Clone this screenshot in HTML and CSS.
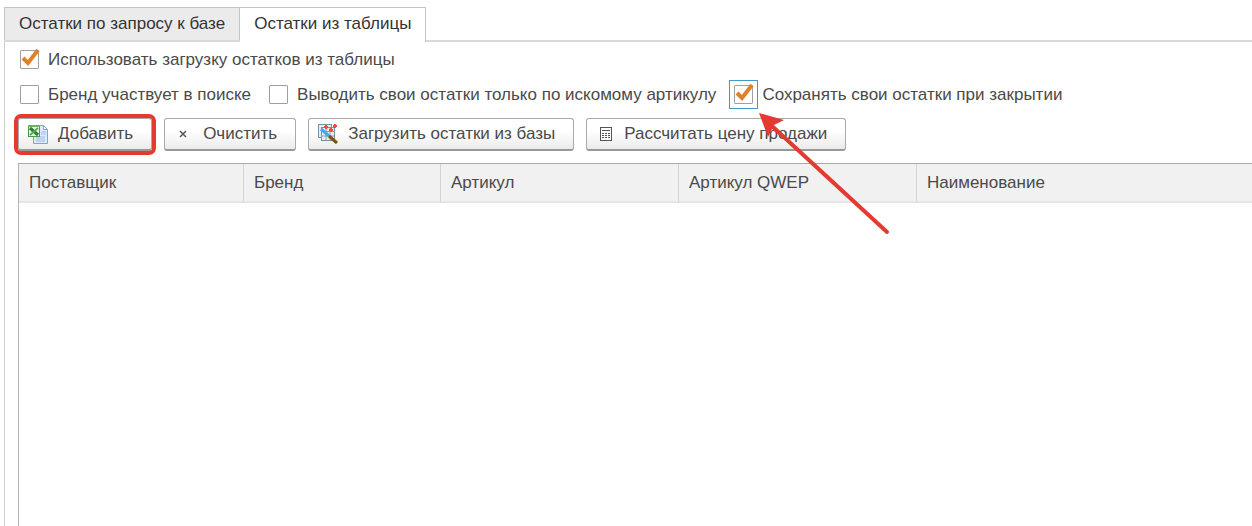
FILE: index.html
```html
<!DOCTYPE html>
<html lang="ru">

<head>
    <meta charset="utf-8">
    <title>Остатки</title>
    <link rel="stylesheet" href="styles.css">
</head>

<body>
    <div class="tabs" role="tablist">
        <button class="tab" type="button" role="tab">Остатки по запросу к базе</button>
        <button class="tab active" type="button" role="tab" aria-selected="true">Остатки из таблицы</button>
    </div>

    <div class="panel">
        <div class="options">
            <label class="option">
                <span class="box">
                    <input type="checkbox" checked>
                    <svg class="tick" viewBox="0 0 20 22"><path d="M3 11 L8 16 L18 3" /></svg>
                </span>
                Использовать загрузку остатков из таблицы
            </label>
        </div>

        <div class="options">
            <label class="option">
                <span class="box"><input type="checkbox"></span>
                Бренд участвует в поиске
            </label>
            <label class="option">
                <span class="box"><input type="checkbox"></span>
                Выводить свои остатки только по искомому артикулу
            </label>
            <label class="option focused">
                <span class="box">
                    <input type="checkbox" checked>
                    <svg class="tick" viewBox="0 0 20 22"><path d="M3 11 L8 16 L18 3" /></svg>
                </span>
                Сохранять свои остатки при закрытии
                <!-- Arrow pointing at the checkbox -->
                <svg class="arrow" viewBox="0 0 132 124">
                    <path d="M14 14 L128 119" />
                    <polygon points="0,0 25,7 15,12 9,24" />
                </svg>
            </label>
        </div>

        <div class="toolbar">
            <button class="btn marked" type="button">
                <svg class="icon" width="22" height="22" viewBox="0 0 22 22">
                    <path d="M6.5 2.500h10l4 4v14h-14z" fill="#dceafa" stroke="#86a4d2" />
                    <path d="M16.500 2.500v4h4z" fill="#fff" stroke="#86a4d2" />
                    <path d="M9 14h9M9 16h9M9 18h9M14 9h5M14 11h5" stroke="#9dbde8" />
                    <rect x="1.500" y="2.500" width="11" height="11" fill="#eef7ea" stroke="#4c9a48" />
                    <path d="M1 3h12" stroke="#6cb065" stroke-width="2" />
                    <path d="M3 5l8 7" stroke="#2c7d35" stroke-width="3" />
                    <path d="M11 5l-8 7" stroke="#5aaa55" stroke-width="2" />
                </svg>
                Добавить
            </button>
            <button class="btn clear" type="button">
                <svg class="icon" width="10" height="10" viewBox="0 0 10 10">
                    <path d="M2 2l6 6M8 2l-6 6" stroke="#555" stroke-width="1.500" />
                </svg>
                Очистить
            </button>
            <button class="btn" type="button">
                <svg class="icon" width="22" height="22" viewBox="0 0 22 22">
                    <rect x="1.500" y="1.500" width="13" height="13" fill="#e6edf3" stroke="#7890a6" />
                    <rect x="4.500" y="4.500" width="13" height="13" fill="#e6edf3" stroke="#7890a6" />
                    <path d="M5 8.500h12M5 13h12M9 5v12M13 5v12" stroke="#8fa2b4" />
                    <path d="M4 6l8 7" stroke="#45a9e8" stroke-width="3" />
                    <path d="M12 13l8 7" stroke="#7a5513" stroke-width="3" />
                    <path d="M9 2v4M7 4h4M18 1v4M16 3h4M14 5v4M12 7h4" stroke="#f04d32" stroke-width="2" />
                </svg>
                Загрузить остатки из базы
            </button>
            <button class="btn calc" type="button">
                <svg class="icon" width="12" height="14" viewBox="0 0 12 14">
                    <rect x=".5" y=".5" width="11" height="13" fill="#fff" stroke="#555" />
                    <path d="M2 3.500h8" stroke="#555" />
                    <path d="M2 6.500h8M2 8.500h8M2 10.500h8" stroke="#555" stroke-dasharray="2 1" />
                </svg>
                Рассчитать цену продажи
            </button>
        </div>

        <div class="grid">
            <table>
                <thead>
                    <tr>
                        <th class="supplier">Поставщик</th>
                        <th class="brand">Бренд</th>
                        <th class="article">Артикул</th>
                        <th class="article">Артикул QWEP</th>
                        <th>Наименование</th>
                    </tr>
                </thead>
            </table>
        </div>
    </div>
</body>

</html>
```
FILE: styles.css
```css
* {
    box-sizing: border-box;
}

body {
    display: flex;
    flex-direction: column;
    min-height: 100vh;
    margin: 0;
    padding: 7px 0 0 4px;
    background-color: #fff;
    color: #4a4a4a;
    font-family: "Liberation Sans", Arial, sans-serif;
    font-size: 17px;
    line-height: 20px;
    overflow: hidden;
}

button {
    font: inherit;
    color: inherit;
    white-space: nowrap;
}

/* Tabs */
.tabs {
    display: flex;
    border-bottom: 2px solid #d9d9d9;
}

.tab {
    height: 33px;
    padding: 0 14px;
    border: 1px solid #c4c4c4;
    border-bottom: none;
    background-color: #ebebeb;
    color: #333;
}

.tab + .tab {
    border-left: none;
}

.tab.active {
    height: 35px;
    margin-bottom: -2px;
    padding-bottom: 2px;
    background-color: #fff;
}

.panel {
    flex: 1;
    display: flex;
    flex-direction: column;
    padding: 8px 0 0 13px;
    border-left: 1px solid #cfcfcf;
}

/* Checkboxes */
.options {
    display: flex;
    gap: 18px;
    padding-left: 2px;
    margin-bottom: 14px;
}

.options + .options {
    margin-top: 1px;
    margin-bottom: 13px;
}

.option {
    display: flex;
    gap: 9px;
    height: 20px;
    position: relative;
    white-space: nowrap;
}

.box {
    display: grid;
    width: 19px;
    height: 19px;
}

.box input,
.tick {
    grid-area: 1 / 1;
}

.box input {
    appearance: none;
    width: 19px;
    height: 19px;
    margin: 0;
    border: 1px solid #a0a0a0;
    border-radius: 1px;
    background-color: #fff;
}

.tick {
    width: 20px;
    height: 22px;
    margin-top: -3px;
    pointer-events: none;
}

.tick path {
    fill: none;
    stroke: #e0812a;
    stroke-width: 4;
}

.focused .box {
    outline: 1px solid #3f9acb;
    outline-offset: 4px;
}

.arrow {
    position: absolute;
    top: 28px;
    left: 25px;
    width: 132px;
    height: 124px;
    z-index: 1;
    pointer-events: none;
}

.arrow path {
    stroke: #e53a30;
    stroke-width: 4;
    stroke-linecap: round;
}

.arrow polygon {
    fill: #e53a30;
}

/* Buttons */
.toolbar {
    display: flex;
    gap: 12px;
    margin-bottom: 12px;
}

.btn {
    display: flex;
    align-items: center;
    gap: 9px;
    height: 33px;
    padding: 0 18px 0 8px;
    border: 1px solid #aaa;
    border-bottom: 2px solid #999;
    border-radius: 3px;
    background: linear-gradient(#fff 40%, #ebebeb);
}

.btn.marked {
    outline: 4px solid #e53a30;
}

.btn.clear {
    gap: 15px;
    padding-left: 13px;
}

.btn.calc {
    gap: 12px;
    padding-left: 13px;
}

.icon {
    flex: none;
    fill: none;
}

/* Table */
.grid {
    flex: 1;
    border-top: 1px solid #aaa;
    border-left: 1px solid #b5b5b5;
}

table {
    width: 100%;
    table-layout: fixed;
    border-collapse: separate;
    border-spacing: 0;
}

th {
    height: 39px;
    padding: 0 10px;
    border-bottom: 2px solid #e6e6e6;
    background-color: #f1f1f1;
    font-weight: normal;
    text-align: left;
    white-space: nowrap;
}

th + th {
    border-left: 1px solid #d4d4d4;
}

.supplier {
    width: 224px;
}

.brand {
    width: 197px;
}

.article {
    width: 238px;
}
```
